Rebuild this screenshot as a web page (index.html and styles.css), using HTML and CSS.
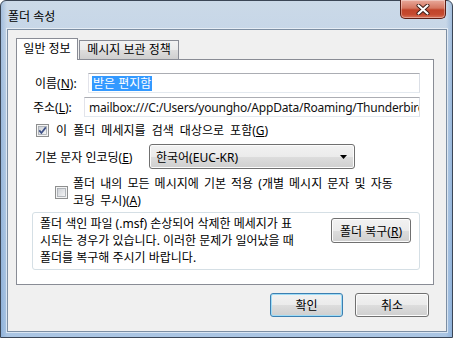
FILE: index.html
```html
<!DOCTYPE html>
<html lang="ko">
<head>
  <meta charset="UTF-8">
  <title>폴더 속성</title>
  <link rel="stylesheet" href="styles.css">
</head>
<body>
  <div class="window">
    <div class="titlebar">
      <span class="title">폴더 속성</span>
      <div class="close-btn">
        <svg width="14" height="11" viewBox="0 0 14 11">
          <path d="M2.5 1.5 L11.5 9.5 M11.5 1.5 L2.5 9.5" stroke="#3a1a14" stroke-width="4" stroke-linecap="round"/>
          <path d="M2.5 1.5 L11.5 9.5 M11.5 1.5 L2.5 9.5" stroke="#ffffff" stroke-width="2.2" stroke-linecap="round"/>
        </svg>
      </div>
    </div>

    <div class="client">
      <div class="tabs">
        <div class="tab active">일반 정보</div>
        <div class="tab">메시지 보관 정책</div>
      </div>

      <div class="panel">
        <div class="row row-name">
          <span class="label label-name">이름(<u>N</u>):</span>
          <div class="textbox"><span class="selected">받은 편지함</span></div>
        </div>

        <div class="row row-address">
          <span class="label label-address">주소(<u>L</u>):</span>
          <div class="textbox address">mailbox:///C:/Users/youngho/AppData/Roaming/Thunderbird</div>
        </div>

        <div class="row row-check">
          <svg class="checkbox" width="13" height="13" viewBox="0 0 13 13">
            <defs>
              <linearGradient id="cbfill" x1="0" y1="0" x2="1" y2="1">
                <stop offset="0" stop-color="#cbcfd5"/>
                <stop offset="1" stop-color="#f7f7f7"/>
              </linearGradient>
            </defs>
            <rect x="0.5" y="0.5" width="12" height="12" fill="#f4f4f4" stroke="#8e8f8f"/>
            <rect x="2.5" y="2.5" width="8" height="8" fill="url(#cbfill)" stroke="#a4a8ae" stroke-width="0.8"/>
            <path d="M3.3 6.4 L5.4 9 L9.8 3.4" fill="none" stroke="#3d4f86" stroke-width="1.7"/>
          </svg>
          <span class="check-text">이 폴더 메세지를 검색 대상으로 포함(<u>G</u>)</span>
        </div>

        <div class="row row-encoding">
          <span class="label label-encoding">기본 문자 인코딩(<u>E</u>)</span>
          <div class="dropdown">
            <span>한국어(EUC-KR)</span>
            <svg width="7" height="4" viewBox="0 0 7 4"><path d="M0 0 H7 L3.5 4 Z" fill="#000"/></svg>
          </div>
        </div>

        <div class="row row-apply">
          <svg class="checkbox" width="13" height="13" viewBox="0 0 13 13">
            <defs>
              <linearGradient id="cbfill2" x1="0" y1="0" x2="1" y2="1">
                <stop offset="0" stop-color="#cbcfd5"/>
                <stop offset="1" stop-color="#f7f7f7"/>
              </linearGradient>
            </defs>
            <rect x="0.5" y="0.5" width="12" height="12" fill="#f4f4f4" stroke="#8e8f8f"/>
            <rect x="2.5" y="2.5" width="8" height="8" fill="url(#cbfill2)" stroke="#a4a8ae" stroke-width="0.8"/>
          </svg>
          <span class="apply-text">폴더 내의 모든 메시지에 기본 적용 (개별 메시지 문자 및 자동<br>코딩 무시)(<u>A</u>)</span>
        </div>

        <div class="groupbox">
          <p class="group-text">폴더 색인 파일 (.msf) 손상되어 삭제한 메세지가 표<br>시되는 경우가 있습니다. 이러한 문제가 일어났을 때<br>폴더를 복구해 주시기 바랍니다.</p>
          <button class="btn btn-repair">폴더 복구(<u>R</u>)</button>
        </div>
      </div>

      <div class="dialog-buttons">
        <button class="btn btn-ok">확인</button>
        <button class="btn btn-cancel">취소</button>
      </div>
    </div>
  </div>
</body>
</html>
```

FILE: styles.css
```css
* {
  margin: 0;
  padding: 0;
  box-sizing: border-box;
}

body {
  width: 453px;
  height: 338px;
  overflow: hidden;
  font-family: "Noto Sans", "Noto Sans CJK KR", sans-serif;
  font-size: 12px;
  color: #000;
  background: #fff;
}

.window {
  width: 453px;
  height: 338px;
  display: flex;
  flex-direction: column;
  border: 1px solid #3b4656;
  border-radius: 6px 6px 0 0;
  background:
    linear-gradient(to right, rgba(90, 140, 200, 0.35) 0, rgba(255, 255, 255, 0) 6px, rgba(255, 255, 255, 0) 445px, rgba(90, 140, 200, 0.35) 451px),
    linear-gradient(to bottom, #cbd9e8 0%, #bcd0e6 30%, #aac5e3 100%);
}

/* title bar */
.titlebar {
  height: 28px;
  display: flex;
  justify-content: space-between;
  align-items: flex-start;
  padding: 0 6px 0 7px;
}

.title {
  align-self: center;
  margin-top: 1px;
  font-size: 12px;
  color: #000;
}

.close-btn {
  width: 46px;
  height: 19px;
  margin-top: -1px;
  display: flex;
  justify-content: center;
  align-items: center;
  border: 1px solid #5d1d13;
  border-top: none;
  border-radius: 0 0 5px 5px;
  background: linear-gradient(to bottom, #e9a99b 0%, #d57660 45%, #c1442a 55%, #c54a2f 80%, #d8735a 100%);
  box-shadow: inset 0 0 0 1px rgba(255, 255, 255, 0.35);
}

/* client area */
.client {
  flex: 1;
  margin: 0 5px 5px 6px;
  border: 1px solid #7c8ea3;
  box-shadow: 0 0 0 1px rgba(255, 255, 255, 0.55);
  background: #f0f0f0;
  padding: 8px 12px 0 8px;
  display: flex;
  flex-direction: column;
}

.tabs {
  display: flex;
  align-items: flex-end;
  height: 21px;
}

.tab {
  height: 19px;
  border: 1px solid #898c95;
  border-bottom: none;
  background: linear-gradient(to bottom, #f2f2f2 0%, #ebebeb 50%, #dddddd 51%, #cfcfcf 100%);
  text-align: center;
  line-height: 17px;
  width: 100px;
  margin-left: 1px;
}

.tab.active {
  position: relative;
  z-index: 1;
  width: 62px;
  height: 22px;
  margin: 0 0 -1px 0;
  background: #fff;
  line-height: 19px;
}

.panel {
  height: 226px;
  border: 1px solid #898c95;
  background: #fff;
  padding: 13px 13px 0 0;
  display: flex;
  flex-direction: column;
}

.row {
  display: flex;
  align-items: center;
}

.label {
  flex-shrink: 0;
}

.row-name {
  height: 20px;
  padding-left: 18px;
}

.label-name {
  width: 53px;
}

.row-address {
  height: 20px;
  margin-top: 4px;
  padding-left: 16px;
}

.label-address {
  width: 51px;
}

.textbox {
  flex: 1;
  height: 20px;
  border: 1px solid;
  border-color: #abadb3 #dbdfe6 #e3e9ef #e2e3ea;
  background: #fff;
  padding-left: 3px;
  display: flex;
  align-items: center;
  overflow: hidden;
  white-space: nowrap;
}

.selected {
  background: #3399ff;
  color: #fff;
  line-height: 15px;
  padding: 0 1px;
}

.textbox.address {
  padding-left: 4px;
  color: #111;
  letter-spacing: -0.2px;
}

.row-check {
  height: 16px;
  margin-top: 5px;
  padding-left: 19px;
}

.checkbox {
  flex-shrink: 0;
  display: block;
}

.check-text {
  margin-left: 7px;
  word-spacing: 3px;
}

.row-encoding {
  height: 25px;
  margin-top: 6px;
  padding-left: 18px;
}

.label-encoding {
  width: 114px;
}

.dropdown {
  width: 206px;
  height: 25px;
  border: 1px solid #707070;
  border-radius: 3px;
  background: linear-gradient(to bottom, #f2f2f2 0%, #ebebeb 50%, #dddddd 51%, #cfcfcf 100%);
  box-shadow: inset 0 0 0 1px #fcfcfc;
  display: flex;
  justify-content: space-between;
  align-items: center;
  padding: 0 7px 0 6px;
}

.row-apply {
  margin-top: 6px;
  padding-left: 38px;
  line-height: 17px;
}

.apply-text {
  margin-left: 5px;
  white-space: nowrap;
  word-spacing: 2px;
}

.groupbox {
  height: 58px;
  margin: 3px 0 0 15px;
  border: 1px solid #d5dfe5;
  border-radius: 3px;
  display: flex;
  justify-content: space-between;
  align-items: flex-start;
  padding: 2px 8px 0 7px;
}

.group-text {
  line-height: 17px;
  white-space: nowrap;
}

.btn {
  font-family: inherit;
  font-size: 12px;
  color: #000;
  height: 24px;
  border: 1px solid #707070;
  border-radius: 3px;
  background: linear-gradient(to bottom, #f2f2f2 0%, #ebebeb 50%, #dddddd 51%, #cfcfcf 100%);
  box-shadow: inset 0 0 0 1px #fcfcfc;
}

.btn-repair {
  width: 80px;
  height: 25px;
  margin-top: 3px;
}

.dialog-buttons {
  display: flex;
  justify-content: flex-end;
  gap: 12px;
  margin-top: 8px;
  padding-right: 5px;
}

.btn-ok {
  width: 73px;
  border-color: #3c7fb1;
  box-shadow: inset 0 0 0 1px #9fdcf6;
}

.btn-cancel {
  width: 74px;
}

u {
  text-decoration: underline;
}
```
